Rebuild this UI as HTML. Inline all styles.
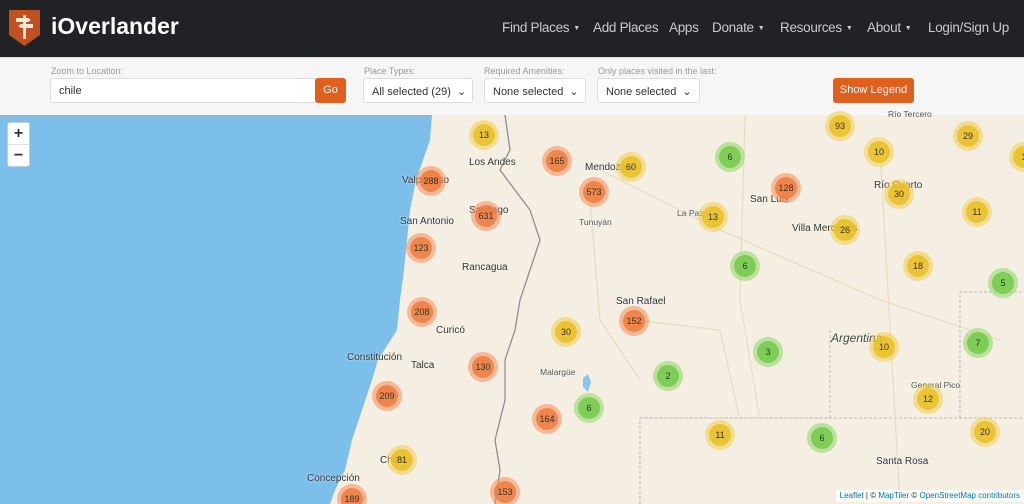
<!DOCTYPE html>
<html><head><meta charset="utf-8"><style>
*{box-sizing:border-box;margin:0;padding:0}
html,body{width:1024px;height:504px;overflow:hidden}
body{font-family:"Liberation Sans",sans-serif;background:#f3efe3;position:relative}
.nav{position:absolute;left:0;top:0;width:1024px;height:57px;background:#202226}
.brand{position:absolute;left:51px;top:13px;color:#fff;font-size:23px;font-weight:bold}
.menu{position:absolute;top:20px;color:#c9cacc;font-size:13.5px;letter-spacing:-0.3px;white-space:nowrap}
.car{font-size:7px;margin-left:4px;vertical-align:2px}
.bar{position:absolute;left:0;top:57px;width:1024px;height:58px;background:#f6f6f6;border-top:1px solid #ddd}
.lbl{position:absolute;top:66px;font-size:9px;color:#9a9a9a;white-space:nowrap}
.inp{position:absolute;top:78px;height:25px;border:1px solid #ddd;background:#fff;border-radius:3px;font-size:11px;color:#333;padding:6px 8px;white-space:nowrap;overflow:hidden}
.btn{position:absolute;background:#e05f1d;color:#fff;font-size:11px;border-radius:3px;text-align:center;white-space:nowrap}
.c{position:absolute;width:30px;height:30px;border-radius:50%;margin:-15px 0 0 -15px}
.c span{position:absolute;left:4px;top:4px;width:22px;height:22px;border-radius:50%;font-size:9px;line-height:22px;text-align:center;color:#333}
.o{background:rgba(245,140,90,.55)}.o span{background:rgba(238,120,55,.8)}
.y{background:rgba(240,205,80,.55)}.y span{background:rgba(232,190,30,.8)}
.g{background:rgba(150,215,110,.6)}.g span{background:rgba(110,200,70,.8)}
.t{position:absolute;font-size:10px;color:#333;white-space:nowrap;text-shadow:0 0 2px #fff}
.s{font-size:8.5px;color:#555}
</style></head><body>
<div class="nav">
<svg style="position:absolute;left:8px;top:9px" width="33" height="38" viewBox="0 0 33 38"><path d="M1 1H32V26L16.5 37L1 26Z" fill="#c24f1f"/><path d="M15 6h3v24h-3z M8 9h12l3 2-3 2H8z M13 15h12v4H13l-3-2z" fill="#f1e6da"/></svg>
<div class="brand">iOverlander</div>
<div class="menu" style="left:502px">Find Places<span class="car">▼</span></div>
<div class="menu" style="left:593px">Add Places</div>
<div class="menu" style="left:669px">Apps</div>
<div class="menu" style="left:712px">Donate<span class="car">▼</span></div>
<div class="menu" style="left:780px">Resources<span class="car">▼</span></div>
<div class="menu" style="left:867px">About<span class="car">▼</span></div>
<div class="menu" style="left:928px">Login/Sign Up</div>
</div>
<div class="bar"></div>
<div class="lbl" style="left:51px">Zoom to Location:</div>
<div class="inp" style="left:50px;width:266px;border-radius:3px 0 0 3px">chile</div>
<div class="btn" style="left:315px;top:78px;width:31px;height:25px;line-height:25px">Go</div>
<div class="lbl" style="left:364px">Place Types:</div>
<div class="inp" style="left:363px;width:110px">All selected (29) &nbsp;⌄</div>
<div class="lbl" style="left:484px">Required Amenities:</div>
<div class="inp" style="left:484px;width:102px">None selected &nbsp;⌄</div>
<div class="lbl" style="left:598px">Only places visited in the last:</div>
<div class="inp" style="left:597px;width:103px">None selected &nbsp;⌄</div>
<div class="btn" style="left:833px;top:78px;width:81px;height:25px;line-height:25px">Show Legend</div>

<svg style="position:absolute;left:0;top:115px" width="1024" height="389" viewBox="0 115 1024 389">
<rect x="0" y="115" width="1024" height="389" fill="#f4efe2"/>
<path d="M0 115H432L430 140L416 180L410 210L407 240L404 270L400 300L397 330L378 360L372 380L362 410L352 440L345 470L335 490L330 504H0Z" fill="#7bbfea"/>
<path d="M505 115L510 150L500 170L515 190L530 210L540 240L530 270L520 300L515 330L505 360L505 400L495 440L500 470L495 504" fill="none" stroke="#8f8f8f" stroke-width="1.3"/>
<path d="M640 504V418H1024 M960 418V292H1024 M830 418V330 M640 418H830" fill="none" stroke="#aaa" stroke-width="0.8" stroke-dasharray="3 2"/>
<path d="M600 170L720 230L880 300L1000 340 M745 115L740 300L760 420 M880 150L900 504 M590 200L600 320L640 380 M635 320L720 330L740 420" fill="none" stroke="#e8dcbe" stroke-width="1.2"/>
<path d="M583 378l5-4 3 8-3 10-5-5z" fill="#8cc4ee"/>
</svg>
<div class="t" style="left:469px;top:157px">Los Andes</div>
<div class="t" style="left:402px;top:175px">Valparaíso</div>
<div class="t" style="left:469px;top:205px">Santiago</div>
<div class="t" style="left:400px;top:216px">San Antonio</div>
<div class="t" style="left:462px;top:262px">Rancagua</div>
<div class="t" style="left:585px;top:162px">Mendoza</div>
<div class="t s" style="left:579px;top:217px">Tunuyán</div>
<div class="t s" style="left:677px;top:208px">La Paz</div>
<div class="t" style="left:750px;top:194px">San Luis</div>
<div class="t" style="left:792px;top:223px">Villa Mercedes</div>
<div class="t" style="left:874px;top:180px">Río Cuarto</div>
<div class="t" style="left:616px;top:296px">San Rafael</div>
<div class="t" style="left:436px;top:325px">Curicó</div>
<div class="t" style="left:347px;top:352px">Constitución</div>
<div class="t" style="left:411px;top:360px">Talca</div>
<div class="t s" style="left:540px;top:367px">Malargüe</div>
<div class="t" style="left:831px;top:331px;font-size:12px;font-style:italic;color:#444">Argentina</div>
<div class="t s" style="left:911px;top:380px">General Pico</div>
<div class="t" style="left:876px;top:456px">Santa Rosa</div>
<div class="t" style="left:380px;top:455px">Chillán</div>
<div class="t" style="left:307px;top:473px">Concepción</div>
<div class="t s" style="left:888px;top:109px">Río Tercero</div>

<div class="c y" style="left:484px;top:135px"><span>13</span></div>
<div class="c o" style="left:557px;top:161px"><span>165</span></div>
<div class="c y" style="left:631px;top:167px"><span>60</span></div>
<div class="c g" style="left:730px;top:157px"><span>6</span></div>
<div class="c y" style="left:840px;top:126px"><span>93</span></div>
<div class="c y" style="left:879px;top:152px"><span>10</span></div>
<div class="c y" style="left:968px;top:136px"><span>29</span></div>
<div class="c y" style="left:1024px;top:157px"><span>1</span></div>
<div class="c o" style="left:431px;top:181px"><span>288</span></div>
<div class="c o" style="left:594px;top:192px"><span>573</span></div>
<div class="c o" style="left:786px;top:188px"><span>128</span></div>
<div class="c y" style="left:899px;top:194px"><span>30</span></div>
<div class="c o" style="left:486px;top:216px"><span>631</span></div>
<div class="c y" style="left:713px;top:217px"><span>13</span></div>
<div class="c y" style="left:845px;top:230px"><span>26</span></div>
<div class="c y" style="left:977px;top:212px"><span>11</span></div>
<div class="c o" style="left:421px;top:248px"><span>123</span></div>
<div class="c g" style="left:745px;top:266px"><span>6</span></div>
<div class="c y" style="left:918px;top:266px"><span>18</span></div>
<div class="c g" style="left:1003px;top:283px"><span>5</span></div>
<div class="c o" style="left:422px;top:312px"><span>208</span></div>
<div class="c y" style="left:566px;top:332px"><span>30</span></div>
<div class="c o" style="left:634px;top:321px"><span>152</span></div>
<div class="c g" style="left:978px;top:343px"><span>7</span></div>
<div class="c g" style="left:768px;top:352px"><span>3</span></div>
<div class="c y" style="left:884px;top:347px"><span>10</span></div>
<div class="c o" style="left:483px;top:367px"><span>130</span></div>
<div class="c g" style="left:668px;top:376px"><span>2</span></div>
<div class="c o" style="left:387px;top:396px"><span>209</span></div>
<div class="c y" style="left:928px;top:399px"><span>12</span></div>
<div class="c g" style="left:589px;top:408px"><span>6</span></div>
<div class="c o" style="left:547px;top:419px"><span>164</span></div>
<div class="c y" style="left:720px;top:435px"><span>11</span></div>
<div class="c g" style="left:822px;top:438px"><span>6</span></div>
<div class="c y" style="left:985px;top:432px"><span>20</span></div>
<div class="c y" style="left:402px;top:460px"><span>81</span></div>
<div class="c o" style="left:505px;top:492px"><span>153</span></div>
<div class="c o" style="left:352px;top:499px"><span>189</span></div>

<div style="position:absolute;left:7px;top:122px;width:23px;height:45px;background:#fff;border:1px solid #ccc;border-radius:3px;font-size:16px;font-weight:bold;text-align:center;color:#333">
<div style="height:22px;line-height:22px;border-bottom:1px solid #ddd">+</div><div style="line-height:21px">−</div></div>
<div style="position:absolute;right:0;top:490px;height:12px;background:rgba(255,255,255,.75);font-size:8px;color:#333;padding:1px 4px;white-space:nowrap"><span style="color:#0078a8">Leaflet</span> | © <span style="color:#0078a8">MapTiler</span> © <span style="color:#0078a8">OpenStreetMap contributors</span></div>
</body></html>
